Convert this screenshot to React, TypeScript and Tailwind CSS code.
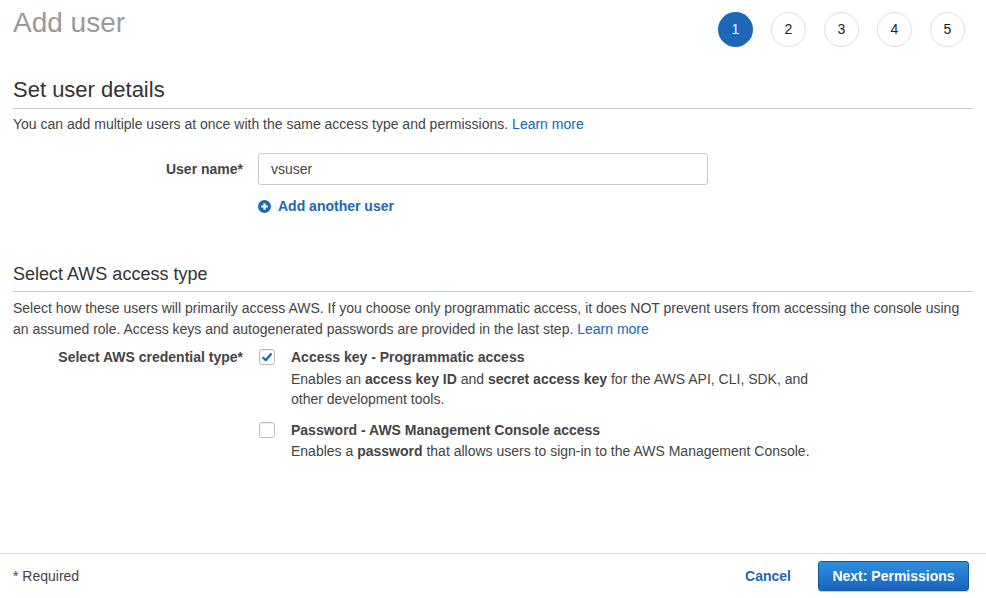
import React from "react";

function Step({ n, active }: { n: number; active?: boolean }) {
  return (
    <div
      className={
        active
          ? "w-[35px] h-[35px] rounded-full bg-[#1c68b6] text-white flex items-center justify-center text-[14px]"
          : "w-[35px] h-[35px] rounded-full border border-[#dddddd] bg-white text-[#222] flex items-center justify-center text-[14px]"
      }
    >
      {n}
    </div>
  );
}

function Check({ checked }: { checked?: boolean }) {
  return (
    <div className="w-[16px] h-[16px] rounded-[3px] border border-[#bbbbbb] bg-white flex items-center justify-center shadow-[inset_0_1px_1px_rgba(0,0,0,0.08)]">
      {checked && (
        <svg width="10" height="9" viewBox="0 0 10 9">
          <path d="M1.2 4.8 L3.8 7.3 L8.8 1.2" fill="none" stroke="#1a67b6" strokeWidth="2.2" strokeLinecap="round" strokeLinejoin="round" />
        </svg>
      )}
    </div>
  );
}

export default function App() {
  return (
    <div
      className="w-[986px] h-[598px] bg-white flex flex-col text-[14px] text-[#444]"
      style={{ fontFamily: '"Liberation Sans", Arial, sans-serif' }}
    >
      <div className="flex-1 px-[13px]">
        <div className="flex justify-between items-start">
          <h1 className="text-[28px] leading-[32px] text-[#999] pt-[7px]">Add user</h1>
          <div className="flex gap-[18px] pt-[12px] pr-[8px]">
            <Step n={1} active />
            <Step n={2} />
            <Step n={3} />
            <Step n={4} />
            <Step n={5} />
          </div>
        </div>

        <h2 className="mt-[30px] text-[22px] leading-[26px] text-[#333] pb-[5px] border-b border-[#cccccc]">
          Set user details
        </h2>
        <p className="mt-[5px] leading-[20px]">
          You can add multiple users at once with the same access type and permissions.{" "}
          <span className="text-[#1166bb]">Learn more</span>
        </p>

        <div className="mt-[19px] flex items-center">
          <div className="w-[230px] text-right font-bold">User name*</div>
          <div className="ml-[15px] w-[450px] h-[32px] border border-[#c8c8c8] rounded-[3px] flex items-center pl-[12px] text-[#444]">
            vsuser
          </div>
        </div>
        <div className="mt-[11px] ml-[245px] flex items-center leading-[20px]">
          <svg width="13" height="13" viewBox="0 0 13 13">
            <circle cx="6.5" cy="6.5" r="6.5" fill="#1c68b6" />
            <path d="M6.5 3.2 V9.8 M3.2 6.5 H9.8" stroke="white" strokeWidth="2.2" />
          </svg>
          <span className="ml-[7px] font-bold text-[#1c68b6]">Add another user</span>
        </div>

        <h2 className="mt-[47px] text-[18px] leading-[22px] text-[#333] pb-[6px] border-b border-[#cccccc]">
          Select AWS access type
        </h2>
        <p className="mt-[6px] leading-[21px]">
          Select how these users will primarily access AWS. If you choose only programmatic access, it does NOT prevent users from accessing the console using an assumed role. Access keys and autogenerated passwords are provided in the last step.{" "}
          <span className="text-[#1166bb]">Learn more</span>
        </p>

        <div className="mt-[7px] flex items-start">
          <div className="w-[230px] text-right font-bold leading-[20px]">Select AWS credential type*</div>
          <div className="ml-[16px] flex flex-col">
            <div className="flex items-start">
              <div className="mt-[2px]">
                <Check checked />
              </div>
              <div className="ml-[16px]">
                <div className="font-bold leading-[20px]">Access key - Programmatic access</div>
                <div className="mt-[2px] leading-[20px] w-[530px]">
                  Enables an <b>access key ID</b> and <b>secret access key</b> for the AWS API, CLI, SDK, and
                  <br />
                  other development tools.
                </div>
              </div>
            </div>
            <div className="flex items-start mt-[11px]">
              <div className="mt-[2px]">
                <Check />
              </div>
              <div className="ml-[16px]">
                <div className="font-bold leading-[20px]">Password - AWS Management Console access</div>
                <div className="mt-[1px] leading-[20px]">
                  Enables a <b>password</b> that allows users to sign-in to the AWS Management Console.
                </div>
              </div>
            </div>
          </div>
        </div>
      </div>

      <div className="h-[45px] border-t border-[#dddddd] flex items-center justify-between pl-[13px] pr-[17px]">
        <span className="text-[#444]">* Required</span>
        <div className="flex items-center">
          <span className="font-bold text-[#1c68b6]">Cancel</span>
          <button className="ml-[27px] w-[151px] h-[30px] rounded-[3px] border border-[#19579a] bg-gradient-to-b from-[#2f8ee0] to-[#1a66bc] text-white font-bold text-[14px] shadow-[0_1px_1px_rgba(0,0,0,0.2)]">
            Next: Permissions
          </button>
        </div>
      </div>
    </div>
  );
}
